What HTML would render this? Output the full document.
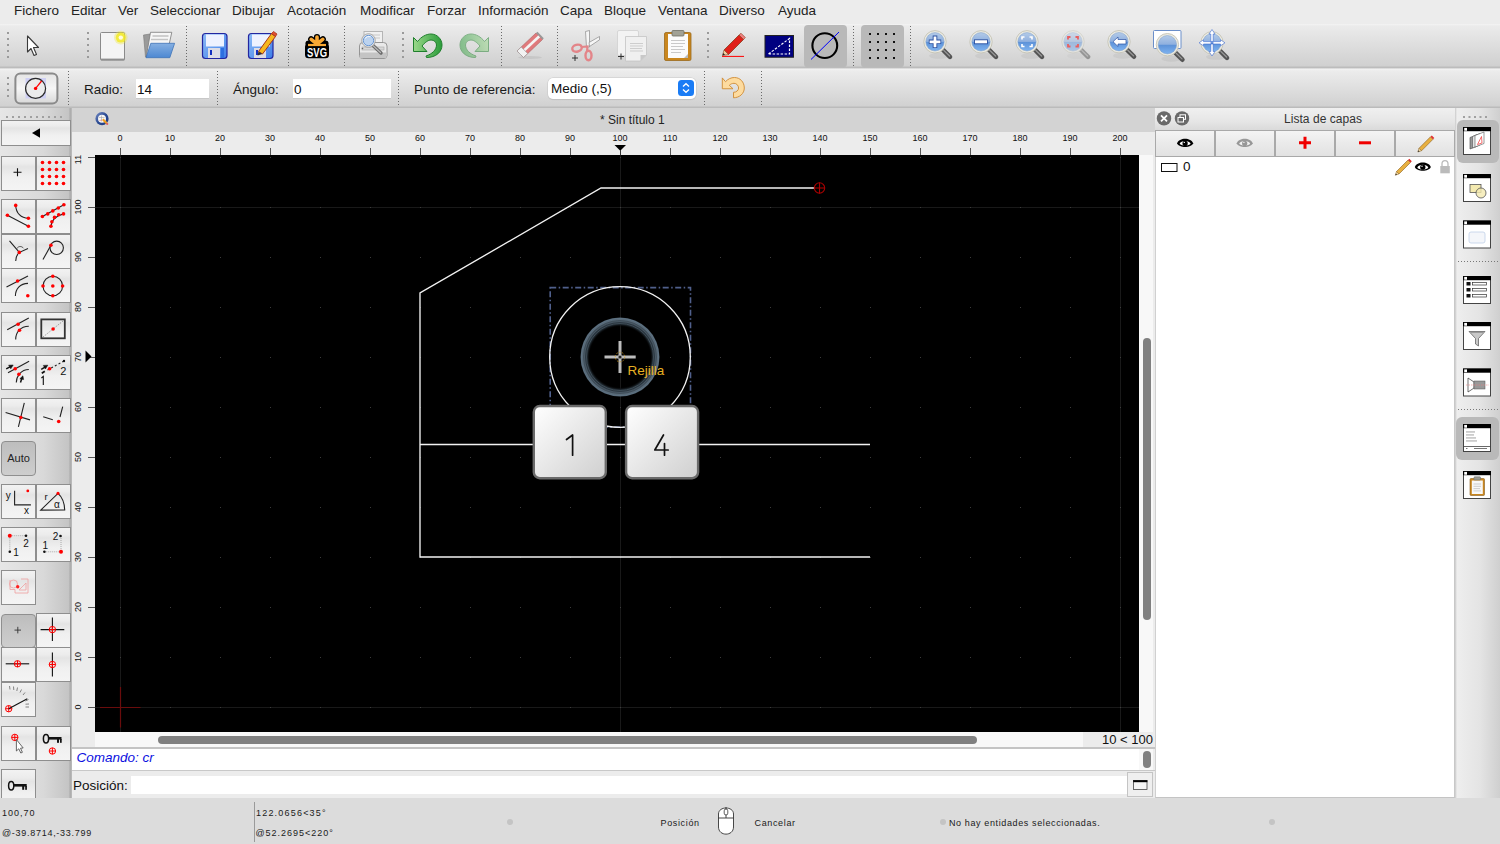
<!DOCTYPE html>
<html><head><meta charset="utf-8">
<style>
*{box-sizing:border-box}
html,body{margin:0;padding:0}
body{width:1500px;height:844px;overflow:hidden;position:relative;background:#ececec;font-family:"Liberation Sans",sans-serif;color:#1e1e1e}
.a{position:absolute}
#menubar{left:0;top:0;width:1500px;height:24px;background:#ececec}
#menubar span{position:absolute;top:3px;font-size:13.5px;line-height:16px;color:#222}
#tb1{left:0;top:24px;width:1500px;height:44px;background:linear-gradient(#f4f4f4 0,#ebebeb 2px,#d0d0d0 42px,#bcbcbc 43px)}
#tb2{left:0;top:68px;width:1500px;height:40px;background:linear-gradient(#c4c4c4 0,#f3f3f3 1px,#ececec 3px,#d1d1d1 38px,#bbbbbb 39px)}
.vsep{position:absolute;width:2px;border-left:2px dotted #8e8e8e}
#leftdock{left:0;top:108px;width:72px;height:690px;background:linear-gradient(90deg,#e6e6e6 0,#d9d9d9 60%,#c4c4c4 69px,#a9a9a9 70px,#bdbdbd 72px)}
#mdi{left:72px;top:108px;width:1083px;height:690px;background:#ececec}
#tabbar{left:0;top:0;width:1083px;height:23px;background:#d4d4d4}
#rightdock{left:1155px;top:108px;width:300px;height:690px;background:#fff}
#righttb{left:1455px;top:108px;width:45px;height:690px;background:linear-gradient(90deg,#d8d8d8 0,#ebebeb 3px,#e2e2e2 30px,#c9c9c9 45px)}
.lb{position:absolute;width:35px;height:35px;border:1px solid #8e8e8e;background:linear-gradient(#f2f2f2 0,#ececec 20%,#e4e4e4 30%,#f0f0f0 60%,#f4f4f4 100%)}
.lbp{position:absolute;border:1px solid #8f8f8f;border-radius:4px;background:linear-gradient(#bdbdbd,#cecece)}
.lyb{position:absolute;top:131px;width:58px;height:24.5px;background:linear-gradient(#f4f4f4,#eaeaea 50%,#e2e2e2)}
.st{font-size:9px;line-height:14px;color:#1a1a1a;letter-spacing:0.65px}
.st2{letter-spacing:0.8px}
#status{left:0;top:798px;width:1500px;height:46px;background:#dcdcdc;font-size:10px}
</style></head><body>
<div id="menubar" class="a">
<span style="left:14px">Fichero</span>
<span style="left:71px">Editar</span>
<span style="left:118px">Ver</span>
<span style="left:150px">Seleccionar</span>
<span style="left:232px">Dibujar</span>
<span style="left:287px">Acotación</span>
<span style="left:360px">Modificar</span>
<span style="left:427px">Forzar</span>
<span style="left:478px">Información</span>
<span style="left:560px">Capa</span>
<span style="left:604px">Bloque</span>
<span style="left:658px">Ventana</span>
<span style="left:719px">Diverso</span>
<span style="left:778px">Ayuda</span>
</div>
<div id="tb1" class="a"></div>
<svg class="a" style="left:0;top:24px" width="1500" height="44" viewBox="0 24 1500 44">
<defs>
<linearGradient id="gBlue" x1="0" y1="0" x2="0" y2="1"><stop offset="0" stop-color="#b4cbe8"/><stop offset="0.48" stop-color="#8fb0df"/><stop offset="0.52" stop-color="#5d92d8"/><stop offset="1" stop-color="#7eb3f0"/></linearGradient>
<linearGradient id="gFlop" x1="0" y1="0" x2="1" y2="1"><stop offset="0" stop-color="#8fbdf7"/><stop offset="1" stop-color="#3d7de8"/></linearGradient>
<linearGradient id="gUndo" x1="0" y1="0" x2="1" y2="0"><stop offset="0" stop-color="#9ad88a"/><stop offset="1" stop-color="#2a9c3a"/></linearGradient>
<g id="lens">
 <ellipse cx="4" cy="14" rx="10" ry="3" fill="#000" opacity="0.05"/>
 <path d="M7.8,7.8 L15,15" stroke="#555" stroke-width="4.6" stroke-linecap="round"/>
 <path d="M8.8,8.6 L14.6,14.2" stroke="#9a9a9a" stroke-width="1.2" stroke-linecap="round"/>
 <circle cx="0" cy="0" r="11.2" fill="#ecebe2" stroke="#c4c3b6" stroke-width="0.9"/>
 <circle cx="0" cy="0" r="9.2" fill="url(#gBlue)" stroke="#7a9cc8" stroke-width="0.5"/>
</g>
</defs>
<!-- handle dots -->
<g fill="#9a9a9a">
 <rect x="7" y="32" width="2" height="2"/><rect x="7" y="38" width="2" height="2"/><rect x="7" y="44" width="2" height="2"/><rect x="7" y="50" width="2" height="2"/><rect x="7" y="56" width="2" height="2"/>
 <rect x="87" y="32" width="2" height="2"/><rect x="87" y="38" width="2" height="2"/><rect x="87" y="44" width="2" height="2"/><rect x="87" y="50" width="2" height="2"/><rect x="87" y="56" width="2" height="2"/>
 <rect x="402" y="32" width="2" height="2"/><rect x="402" y="38" width="2" height="2"/><rect x="402" y="44" width="2" height="2"/><rect x="402" y="50" width="2" height="2"/><rect x="402" y="56" width="2" height="2"/>
 <rect x="707" y="32" width="2" height="2"/><rect x="707" y="38" width="2" height="2"/><rect x="707" y="44" width="2" height="2"/><rect x="707" y="50" width="2" height="2"/><rect x="707" y="56" width="2" height="2"/>
</g>
<!-- fine separators -->
<g stroke="#6a6a6a" stroke-width="1" stroke-dasharray="1 2">
 <line x1="186.5" y1="26" x2="186.5" y2="67"/>
 <line x1="288.5" y1="26" x2="288.5" y2="67"/>
 <line x1="344.5" y1="26" x2="344.5" y2="67"/>
 <line x1="501.5" y1="26" x2="501.5" y2="67"/>
 <line x1="557.5" y1="26" x2="557.5" y2="67"/>
 <line x1="853.5" y1="26" x2="853.5" y2="67"/>
 <line x1="910.5" y1="26" x2="910.5" y2="67"/>
</g>
<!-- pointer -->
<path d="M27.5,36 L27.5,52 L31,48.5 L34,55.5 L36.5,54.5 L33.5,47.5 L38.5,47.5 Z" fill="#fff" stroke="#3a3a3a" stroke-width="1.1" stroke-linejoin="round"/>
<!-- new doc -->
<rect x="100.5" y="32.5" width="24" height="27.5" rx="1" fill="#f4f4f4" stroke="#8a8a8a" stroke-width="1"/>
<rect x="101" y="58.6" width="23.5" height="1.8" fill="#8f8f8f"/>
<circle cx="120.8" cy="37.6" r="6.8" fill="#eee430" opacity="0.35"/>
<circle cx="120.8" cy="37.6" r="5" fill="#f2ea22" opacity="0.8"/>
<circle cx="120.8" cy="37.6" r="2.2" fill="#fffbe0"/>
<!-- open folder -->
<path d="M143.5,35 L150,34 L152,34 L147,57 L145.5,57 Z" fill="#9a9a9a" stroke="#777" stroke-width="0.6"/>
<path d="M150.5,32.3 L171.8,32.3 L169.3,43.5 L146.3,56.5 Z" fill="#f6f6f6" stroke="#7a7a7a" stroke-width="0.8"/>
<path d="M152.5,36 L168.5,36" stroke="#bdbdbd" stroke-width="1.4"/><path d="M151,39.5 L168,39.5" stroke="#c4c4c4" stroke-width="1.4"/>
<defs><linearGradient id="gFold" x1="0" y1="0" x2="0" y2="1"><stop offset="0" stop-color="#86b0e2"/><stop offset="1" stop-color="#4d88d2"/></linearGradient></defs>
<path d="M150.8,43.3 L174.6,43.3 L169.8,57.7 L146,57.7 Z" fill="url(#gFold)" stroke="#3f73b8" stroke-width="0.8" stroke-linejoin="round"/>
<!-- save -->
<rect x="202.5" y="33.5" width="24.5" height="25" rx="3" fill="url(#gFlop)" stroke="#2326a0" stroke-width="1.2"/>
<rect x="206" y="34.5" width="18" height="12" fill="#eef2ff"/>
<rect x="208" y="48" width="12" height="10" fill="#dcdce6"/>
<rect x="210" y="50" width="2" height="5" fill="#1530c0"/>
<rect x="221" y="48" width="3" height="10" fill="#2d6fe0"/>
<!-- save as -->
<rect x="248.5" y="33.5" width="24.5" height="25" rx="3" fill="url(#gFlop)" stroke="#2326a0" stroke-width="1.2"/>
<rect x="252" y="34.5" width="18" height="12" fill="#eef2ff"/>
<rect x="254" y="48" width="12" height="10" fill="#dcdce6"/>
<rect x="256" y="50" width="2" height="5" fill="#1530c0"/>
<path d="M258.5,51.5 L271.5,33.5 L275.5,36.5 L262.5,54 Z" fill="#f6b820" stroke="#a8341a" stroke-width="1"/>
<path d="M271.5,33.5 L273.5,31.5 L277,34 L275.5,36.5 Z" fill="#e05030" stroke="#a8341a" stroke-width="0.8"/>
<path d="M258.5,51.5 L257.5,55.5 L262.5,54 Z" fill="#333"/>
<!-- SVG -->
<rect x="305" y="43.5" width="24" height="14.8" rx="3.5" fill="#000"/>
<g stroke="#000" stroke-width="6.2" stroke-linecap="round"><path d="M317,44 L317,37 M317,44 L311.2,39.3 M317,44 L322.8,39.3 M317,44 L308.5,43.5 M317,44 L325.5,43.5"/></g>
<g stroke="#f9a833" stroke-width="3.6" stroke-linecap="round"><path d="M317,44 L317,37 M317,44 L311.2,39.3 M317,44 L322.8,39.3"/></g>
<path d="M308,45 L326,45" stroke="#f9a833" stroke-width="2.2"/>
<text x="317" y="56.5" text-anchor="middle" font-family="Liberation Sans" font-weight="bold" font-size="12" fill="#fff" textLength="20" lengthAdjust="spacingAndGlyphs">SVG</text>
<!-- print preview -->
<rect x="364" y="31.5" width="18.5" height="14" fill="#f0f0f0" stroke="#b0b0b0" stroke-width="0.9"/>
<path d="M367,35 L380,35 M367,38 L380,38" stroke="#c8c8c8" stroke-width="1"/>
<path d="M359.5,46 Q359.5,42.5 363,42.5 L383.5,42.5 Q387,42.5 387,46 L387,55.5 Q387,58.5 384,58.5 L362.5,58.5 Q359.5,58.5 359.5,55.5 Z" fill="#e9e9e9" stroke="#8c8c8c" stroke-width="0.9"/>
<rect x="360" y="52.5" width="26.5" height="5.5" fill="#c4c4c4"/>
<rect x="362" y="47" width="22" height="3" fill="#d8d8d8" stroke="#a8a8a8" stroke-width="0.6"/>
<circle cx="362.5" cy="48.5" r="0.8" fill="#666"/>
<path d="M373,45.5 L381,53" stroke="#6a6a6a" stroke-width="3.4" stroke-linecap="round"/>
<path d="M373.5,46 L380.5,52.5" stroke="#b8b8b8" stroke-width="1.2" stroke-linecap="round"/>
<circle cx="368.5" cy="40.5" r="6.8" fill="#e8e8e8" stroke="#9a9a9a" stroke-width="0.8"/>
<circle cx="368.5" cy="40.5" r="5.2" fill="#bcd3ef" stroke="#5d8fd0" stroke-width="0.9"/>
<path d="M365,38.5 Q367,35.8 370.5,36.5" stroke="#fff" stroke-width="1" fill="none" opacity="0.8"/>
<!-- undo -->
<path d="M413.5,37.5 L417.5,41.5 C421,37 426,34 431,34 C437,34 442,39 442,45 C442,52 436,57.5 426.5,57.5 L426,56 C432,54 436.5,50 436.5,45 C436.5,42 434,40 431,40 C428,40 425,42.5 422,46 L427,51.5 L413.5,51.5 Z" fill="url(#gUndo)" stroke="#1f7f2c" stroke-width="1"/>
<!-- redo -->
<g opacity="0.5"><path transform="translate(902,0) scale(-1,1)" d="M413.5,37.5 L417.5,41.5 C421,37 426,34 431,34 C437,34 442,39 442,45 C442,52 436,57.5 426.5,57.5 L426,56 C432,54 436.5,50 436.5,45 C436.5,42 434,40 431,40 C428,40 425,42.5 422,46 L427,51.5 L413.5,51.5 Z" fill="url(#gUndo)" stroke="#1f7f2c" stroke-width="1"/></g>
<!-- eraser -->
<ellipse cx="530" cy="57.5" rx="12" ry="1.5" fill="#bdbdbd" opacity="0.6"/>
<path d="M517,51 L536,33 L542.5,39.5 L523.5,57.5 Z" fill="#e07a7c" stroke="#b5686a" stroke-width="0.7"/>
<path d="M520,54.3 L539.3,36.2" stroke="#f4f4f4" stroke-width="2.6"/>
<path d="M536,33 L537.5,31.8 L543.8,38.2 L542.5,39.5 Z" fill="#999"/>
<path d="M517,51 L521.2,47 L527.7,53.5 L523.5,57.5 Z" fill="#f2f2f2" stroke="#9a9a9a" stroke-width="0.7"/>
<!-- scissors -->
<path d="M585.5,31.5 L589.5,30.5 L589.5,47 L586.5,47 Z" fill="#f6f6f6" stroke="#8a8a8a" stroke-width="0.7"/>
<path d="M589,42.5 L599.5,36.5 L599.5,39.8 L589.5,46.5 Z" fill="#f6f6f6" stroke="#8a8a8a" stroke-width="0.7"/>
<ellipse cx="577" cy="48.2" rx="4.8" ry="3.4" transform="rotate(-15 577 48.2)" fill="none" stroke="#e38589" stroke-width="2.4"/>
<ellipse cx="588.5" cy="55.5" rx="3" ry="4.8" fill="none" stroke="#e38589" stroke-width="2.4"/>
<path d="M581.5,47 L587.5,46.5 L587,51" stroke="#e38589" stroke-width="2.2" fill="none"/>
<path d="M572,58 L578,58 M575,55 L575,61" stroke="#333" stroke-width="1"/>
<!-- copy -->
<rect x="617.5" y="30.5" width="21" height="25" rx="1.5" fill="#f3f3f3" stroke="#cfcfcf" stroke-width="0.8"/>
<path d="M625.5,36.5 L646.5,36.5 L646.5,55 L640.5,61 L625.5,61 Z" fill="#f0f0f0" stroke="#c4c4c4" stroke-width="0.8"/>
<path d="M640.5,61 L640.5,55 L646.5,55 Z" fill="#c8c8c8"/>
<g stroke="#cdcdcd" stroke-width="1"><path d="M630,43.5 L643,43.5 M630,46 L643,46 M630,48.5 L642,48.5 M630,51 L643,51"/></g>
<path d="M618,56.5 L624,56.5 M621,53.5 L621,59.5" stroke="#333" stroke-width="1"/>
<!-- paste -->
<rect x="664.5" y="32.5" width="26.5" height="28" rx="1.5" fill="#c9861e" stroke="#9a6a1c" stroke-width="0.8"/>
<rect x="668" y="34" width="20" height="24" fill="#fbfbfb"/>
<path d="M684,58 L688,58 L688,54 Z" fill="#bbb"/>
<rect x="672" y="30.5" width="12" height="5.5" rx="1" fill="#a2a296" stroke="#6f6f64" stroke-width="0.8"/>
<g stroke="#c9c9c9" stroke-width="1"><path d="M671,40.5 L685,40.5 M671,43.5 L685,43.5 M671,46.5 L683,46.5 M671,49.5 L685,49.5 M671,52.5 L681,52.5"/></g>
<!-- pencil -->
<path d="M722,56.4 L744,56.4" stroke="#ff0000" stroke-width="1"/>
<path d="M724,50 L739,35 L743.5,39.5 L728.5,54.5 Z" fill="#e0201a" stroke="#8a3a1a" stroke-width="0.8"/>
<path d="M739,35 L741,33.2 L745.3,37.5 L743.5,39.5 Z" fill="#f08080" stroke="#8a3a1a" stroke-width="0.6"/>
<path d="M724,50 L722.5,55.5 L728.5,54.5 Z" fill="#f0d0a0" stroke="#8a3a1a" stroke-width="0.6"/>
<path d="M722.5,55.5 L723.2,53 L725,54.8 Z" fill="#222"/>
<!-- blue triangle -->
<rect x="765" y="35.5" width="28.5" height="21.7" fill="#000080" stroke="#222" stroke-width="1"/>
<path d="M768.5,54 L789.5,38.5 L789.5,54 Z" fill="none" stroke="#fff" stroke-width="1.2" stroke-dasharray="2.5 1.5"/>
<!-- pressed buttons -->
<rect x="804" y="25" width="43" height="42.4" rx="4" fill="#b9b9b9"/>
<rect x="861" y="25" width="43" height="42.4" rx="4" fill="#b9b9b9"/>
<circle cx="824.8" cy="45.6" r="12.4" fill="none" stroke="#000" stroke-width="2.1"/>
<path d="M811,59.5 L839,32" stroke="#0000ff" stroke-width="1"/>
<g fill="#111">
 <rect x="869" y="33" width="2" height="2"/><rect x="877" y="33" width="2" height="2"/><rect x="885" y="33" width="2" height="2"/><rect x="893" y="33" width="2" height="2"/>
 <rect x="869" y="41" width="2" height="2"/><rect x="877" y="41" width="2" height="2"/><rect x="885" y="41" width="2" height="2"/><rect x="893" y="41" width="2" height="2"/>
 <rect x="869" y="49" width="2" height="2"/><rect x="877" y="49" width="2" height="2"/><rect x="885" y="49" width="2" height="2"/><rect x="893" y="49" width="2" height="2"/>
 <rect x="869" y="57" width="2" height="2"/><rect x="877" y="57" width="2" height="2"/><rect x="885" y="57" width="2" height="2"/><rect x="893" y="57" width="2" height="2"/>
</g>
<!-- zoom icons -->
<use href="#lens" x="935" y="41.8"/>
<path d="M928.8,41.8 L941.2,41.8 M935,35.6 L935,48" stroke="#2a50a0" stroke-width="4.6"/>
<path d="M929.6,41.8 L940.4,41.8 M935,36.4 L935,47.2" stroke="#fff" stroke-width="2.8"/>
<use href="#lens" x="981" y="41.8"/>
<rect x="974.5" y="39.8" width="13" height="4" fill="#fff" stroke="#2a50a0" stroke-width="0.9"/>
<use href="#lens" x="1027" y="41.8"/>
<g fill="none" stroke="#fff" stroke-width="1.6"><path d="M1022,39.5 L1022,37 L1024.5,37 M1029.5,37 L1032,37 L1032,39.5 M1032,44 L1032,46.5 L1029.5,46.5 M1024.5,46.5 L1022,46.5 L1022,44"/></g>
<g opacity="0.5"><use href="#lens" x="1073" y="41.8"/></g>
<g fill="none" stroke="#e86060" stroke-width="1.8"><path d="M1068,39.5 L1068,37 L1070.5,37 M1075.5,37 L1078,37 L1078,39.5 M1078,44 L1078,46.5 L1075.5,46.5 M1070.5,46.5 L1068,46.5 L1068,44"/></g>
<use href="#lens" x="1119" y="41.7"/>
<path d="M1113,41.7 L1118,37 L1118,39.5 L1126,39.5 L1126,44 L1118,44 L1118,46.5 Z" fill="#fff" stroke="#2a50a0" stroke-width="0.7"/>
<rect x="1153.5" y="30.5" width="27.5" height="18" rx="1" fill="#fff" stroke="#6b8fca" stroke-width="1"/>
<use href="#lens" x="1167.4" y="44.7"/>
<use href="#lens" x="1212" y="42.8"/>
<g fill="#fff" stroke="#3a6ad0" stroke-width="0.6">
 <path d="M1212,29.5 L1215,34 L1213.2,34 L1213.2,41.6 L1210.8,41.6 L1210.8,34 L1209,34 Z"/>
 <path d="M1212,56 L1215,51.5 L1213.2,51.5 L1213.2,44 L1210.8,44 L1210.8,51.5 L1209,51.5 Z"/>
 <path d="M1199,42.8 L1203.5,39.8 L1203.5,41.6 L1211,41.6 L1211,44 L1203.5,44 L1203.5,45.8 Z"/>
 <path d="M1225,42.8 L1220.5,39.8 L1220.5,41.6 L1213,41.6 L1213,44 L1220.5,44 L1220.5,45.8 Z"/>
</g>
</svg>

<div id="tb2" class="a"></div>
<svg class="a" style="left:0;top:68px" width="1500" height="40" viewBox="0 68 1500 40">
<g fill="#9a9a9a"><rect x="7" y="77" width="2" height="2"/><rect x="7" y="83" width="2" height="2"/><rect x="7" y="89" width="2" height="2"/><rect x="7" y="95" width="2" height="2"/></g>
<g stroke="#6a6a6a" stroke-width="1" stroke-dasharray="1 2">
 <line x1="68.5" y1="71" x2="68.5" y2="105"/>
 <line x1="217.5" y1="71" x2="217.5" y2="105"/>
 <line x1="398.5" y1="71" x2="398.5" y2="105"/>
 <line x1="704.5" y1="71" x2="704.5" y2="105"/>
 <line x1="761.5" y1="71" x2="761.5" y2="105"/>
</g>
<defs><linearGradient id="gBtn" x1="0" y1="0" x2="0" y2="1"><stop offset="0" stop-color="#e4e4e4"/><stop offset="0.5" stop-color="#f6f6f6"/><stop offset="1" stop-color="#d8d8d8"/></linearGradient></defs>
<rect x="15.4" y="73.5" width="42" height="30" rx="5" fill="url(#gBtn)" stroke="#8a8a8a" stroke-width="2"/>
<rect x="25.5" y="78" width="20.5" height="20.5" fill="#cfd0f4"/>
<circle cx="35.6" cy="88.4" r="10" fill="#ececec" stroke="#2a2a2a" stroke-width="1.2"/>
<path d="M35.6,88.4 L41.6,81" stroke="#ff0000" stroke-width="1.2"/>
<circle cx="35.6" cy="88.4" r="1.7" fill="#ff0000"/>
<path d="M722.3,77.9 L725.5,81.7 C728,79 731,77.5 734.5,77.5 C740,77.5 744.3,82 744.3,88 C744.3,93.5 739.5,97.8 733.5,97.8 L733.5,92.3 C736.5,92.3 738.6,90.3 738.6,88 C738.6,85.5 736.5,83.3 734,83.3 C732,83.3 730.5,84.2 729.3,85.3 L733,88.75 L722.3,88.75 Z" fill="#fddb9f" stroke="#cf8a32" stroke-width="0.9" stroke-linejoin="round"/>
</svg>
<div class="a" style="left:84px;top:81.5px;font-size:13.5px;line-height:16px;color:#1a1a1a">Radio:</div>
<div class="a" style="left:136px;top:79px;width:73px;height:19px;background:#fff;box-shadow:0 1px 0 #c8c8c8;font-size:13.5px;line-height:19px;padding-left:1px;padding-top:0.5px;color:#111">14</div>
<div class="a" style="left:233px;top:81.5px;font-size:13.5px;line-height:16px;color:#1a1a1a">Ángulo:</div>
<div class="a" style="left:293px;top:79px;width:98px;height:19px;background:#fff;box-shadow:0 1px 0 #c8c8c8;font-size:13.5px;line-height:19px;padding-left:1px;padding-top:0.5px;color:#111">0</div>
<div class="a" style="left:414px;top:81.5px;font-size:13.5px;line-height:16px;color:#1a1a1a">Punto de referencia:</div>
<div class="a" style="left:548px;top:77.5px;width:148px;height:21px;background:#fff;border-radius:5px;box-shadow:0 0 0 0.5px #c8c8c8, 0 1px 1px rgba(0,0,0,0.12);font-size:13.5px;line-height:21px;padding-left:3px;padding-top:0.5px;color:#111">Medio (,5)
 <div class="a" style="left:130px;top:2.5px;width:16px;height:16px;background:#1a7cf5;border-radius:3.5px">
  <svg width="16" height="16" style="position:absolute;left:0;top:0"><path d="M5,6.5 L8,3.8 L11,6.5 M5,9.5 L8,12.2 L11,9.5" fill="none" stroke="#fff" stroke-width="1.4"/></svg>
 </div>
</div>

<div id="leftdock" class="a"></div>
<div id="ldbtns">
<div class="lb" style="left:1px;top:120px;width:70px;height:26px"></div>
<div class="lb" style="left:1px;top:156px"></div><div class="lb" style="left:36px;top:156px"></div>
<div class="lb" style="left:1px;top:199px"></div><div class="lb" style="left:36px;top:199px"></div>
<div class="lb" style="left:1px;top:233.5px"></div><div class="lb" style="left:36px;top:233.5px"></div>
<div class="lb" style="left:1px;top:268px"></div><div class="lb" style="left:36px;top:268px"></div>
<div class="lb" style="left:1px;top:312px"></div><div class="lb" style="left:36px;top:312px"></div>
<div class="lb" style="left:1px;top:355px"></div><div class="lb" style="left:36px;top:355px"></div>
<div class="lb" style="left:1px;top:398px"></div><div class="lb" style="left:36px;top:398px"></div>
<div class="lbp" style="left:1px;top:441px;width:35px;height:34.5px"></div>
<div class="lb" style="left:1px;top:484px"></div><div class="lb" style="left:36px;top:484px"></div>
<div class="lb" style="left:1px;top:527px"></div><div class="lb" style="left:36px;top:527px"></div>
<div class="lb" style="left:1px;top:570px"></div>
<div class="lbp" style="left:1px;top:613.5px;width:35px;height:34px"></div><div class="lb" style="left:36px;top:613px"></div>
<div class="lb" style="left:1px;top:647px"></div><div class="lb" style="left:36px;top:647px"></div>
<div class="lb" style="left:1px;top:682px"></div>
<div class="lb" style="left:1px;top:725.5px"></div><div class="lb" style="left:36px;top:725.5px"></div>
<div class="lb" style="left:1px;top:769px;height:40px"></div>
</div>
<svg class="a" style="left:0;top:108px" width="72" height="690" viewBox="0 108 72 690">
<g fill="#a0a0a0"><rect x="6" y="116" width="2" height="2"/><rect x="12" y="116" width="2" height="2"/><rect x="18" y="116" width="2" height="2"/><rect x="24" y="116" width="2" height="2"/><rect x="30" y="116" width="2" height="2"/><rect x="36" y="116" width="2" height="2"/><rect x="42" y="116" width="2" height="2"/><rect x="48" y="116" width="2" height="2"/><rect x="54" y="116" width="2" height="2"/><rect x="60" y="116" width="2" height="2"/></g>
<path d="M32,133 L40,128.3 L40,137.7 Z" fill="#000"/>
<path d="M13.5,172.3 L21.5,172.3 M17.5,168.3 L17.5,176.3" stroke="#111" stroke-width="1.1"/>
<g fill="#ff0000">
 <circle cx="42.5" cy="162.5" r="1.8"/><circle cx="49.5" cy="162.5" r="1.8"/><circle cx="56.5" cy="162.5" r="1.8"/><circle cx="63.5" cy="162.5" r="1.8"/>
 <circle cx="42.5" cy="169.5" r="1.8"/><circle cx="49.5" cy="169.5" r="1.8"/><circle cx="56.5" cy="169.5" r="1.8"/><circle cx="63.5" cy="169.5" r="1.8"/>
 <circle cx="42.5" cy="176.5" r="1.8"/><circle cx="49.5" cy="176.5" r="1.8"/><circle cx="56.5" cy="176.5" r="1.8"/><circle cx="63.5" cy="176.5" r="1.8"/>
 <circle cx="42.5" cy="183.5" r="1.8"/><circle cx="49.5" cy="183.5" r="1.8"/><circle cx="56.5" cy="183.5" r="1.8"/><circle cx="63.5" cy="183.5" r="1.8"/>
</g>
<g stroke="#222" stroke-width="1.1" fill="none">
 <!-- R2 -->
 <path d="M15.7,205.4 C16,213 21,218.2 28.4,218.2"/>
 <path d="M7.4,215.2 L28.4,226.3"/>
 <path d="M42.4,216.5 L63.9,204.8"/>
 <path d="M50.9,226.3 C51.5,221 55,216 63.5,213.9"/>
 <!-- R3 -->
 <path d="M9.5,240.9 L19.3,252.4 L28,248.5 M19.3,252.4 C16.5,255 15.7,258 15.7,261"/>
 <path d="M17,248.5 C18,246 22,245.8 23.5,248.3" stroke-width="0.7"/>
 <circle cx="56.7" cy="247.8" r="6.7"/>
 <path d="M43,259.6 L50.9,245.2"/>
 <!-- R4 -->
 <path d="M6.5,287 L28,275.9"/>
 <path d="M15.4,296 C15.4,289 20,283.4 28,283.4"/>
 <circle cx="52.8" cy="286" r="9.8"/>
 <!-- R5 -->
 <path d="M7.2,329.8 L28.8,318.1"/>
 <path d="M15.7,339.4 C15.7,333 20,326.3 28.8,326.3"/>
 <rect x="41.3" y="319.4" width="23.5" height="18.9" stroke-width="1.8" stroke="#333"/>
 <path d="M43,337 L63,321" stroke-width="0.6" stroke-dasharray="1.5 1.2" stroke="#666"/>
 <!-- R6 -->
 <path d="M8,372.7 L29.1,361.2"/>
 <path d="M16.3,382.5 C16.5,376 21,369.5 28.8,369.5"/>
 <path d="M47.5,370 L64,361" stroke-dasharray="2 2.2"/>
 <!-- R7 -->
 <path d="M5.6,412.5 L30,419.9 M24.3,402.9 L18.4,426.9"/>
 <path d="M43.2,416.7 L52.8,419.7 M62.7,406.6 L60,417"/>
 <!-- R8 -->
 <path d="M14.6,490.7 L14.6,504.9 L30.9,504.9"/>
 <path d="M40.7,510.1 L58,493.4 C62,497 64.5,503 64.7,510 Z"/>
</g>
<g fill="#ff0000">
 <circle cx="15.7" cy="205.4" r="1.8"/><circle cx="28.4" cy="218.2" r="1.8"/><circle cx="7.4" cy="215.2" r="1.8"/><circle cx="28.4" cy="226.3" r="1.8"/>
 <circle cx="42.4" cy="216.5" r="1.8"/><circle cx="47.7" cy="213.9" r="1.8"/><circle cx="52.8" cy="210.9" r="1.8"/><circle cx="58.3" cy="208" r="1.8"/><circle cx="63.9" cy="204.8" r="1.8"/>
 <circle cx="50.9" cy="226.3" r="1.8"/><circle cx="51.9" cy="221.7" r="1.8"/><circle cx="54.5" cy="217.4" r="1.8"/><circle cx="58.7" cy="214.8" r="1.8"/><circle cx="63.5" cy="213.9" r="1.8"/>
 <circle cx="19.3" cy="252.4" r="1.8"/><circle cx="50.9" cy="245.2" r="1.8"/>
 <circle cx="17.6" cy="281" r="1.8"/><circle cx="27.8" cy="295.8" r="1.8"/>
 <circle cx="52.8" cy="286" r="1.8"/><circle cx="52.8" cy="276.2" r="1.8"/><circle cx="52.8" cy="295.8" r="1.8"/><circle cx="43" cy="286" r="1.8"/><circle cx="62.6" cy="286" r="1.8"/>
 <circle cx="18.1" cy="324.2" r="1.8"/><circle cx="19.5" cy="330.3" r="1.8"/><circle cx="53.1" cy="329" r="1.8"/>
 <circle cx="15.2" cy="368.7" r="1.8"/><circle cx="18.9" cy="374.3" r="1.8"/><circle cx="49.6" cy="368.7" r="1.8"/>
 <circle cx="20.8" cy="417.5" r="1.8"/><circle cx="58.7" cy="421.5" r="1.8"/>
 <circle cx="27.8" cy="490.9" r="1.4"/><circle cx="58" cy="493.4" r="1.6"/>
</g>
<g fill="#111" stroke="#111" stroke-linejoin="round">
 <path d="M6.2,368.8 L10,366.8" stroke-width="1.5"/><path d="M13.2,365 L8.6,365.2 L10.8,368.8 Z" stroke-width="0.5"/>
 <path d="M20.5,382.5 L21.8,378.5" stroke-width="1.5"/><path d="M22.9,375.8 L19.8,378.8 L23.6,379.6 Z" stroke-width="0.5"/>
 <path d="M41.2,369.3 L45,367.2" stroke-width="1.5"/><path d="M47.8,365.2 L43.3,365.4 L45.4,369 Z" stroke-width="0.5"/>
 <path d="M41.8,373.2 L44.8,371.3" stroke-width="1.8"/><circle cx="64" cy="361" r="1.2" stroke="none"/>
</g>
<g font-family="Liberation Sans" fill="#111">
 <path d="M41.4,378 L43.3,376.4 L43.3,385" fill="none" stroke="#111" stroke-width="1.1"/><text x="60.3" y="374.9" font-size="11">2</text>
 <text x="5.8" y="498.5" font-size="10">y</text><text x="24" y="513.5" font-size="10">x</text>
 <text x="44.5" y="500" font-size="9.5">r</text><text x="54" y="508" font-size="10">α</text>
 <text x="13.3" y="556" font-size="10">1</text><text x="23.2" y="547" font-size="10">2</text>
 <text x="42.5" y="549" font-size="10">1</text><text x="52.8" y="540" font-size="10">2</text>
</g>
<text x="18.5" y="462" font-family="Liberation Sans" font-size="11" fill="#222" text-anchor="middle">Auto</text>
<g stroke="#999" stroke-width="0.8" fill="none" stroke-dasharray="1 1">
 <path d="M9.8,535.7 L26,535.7 M9.8,535.7 L9.8,551.8"/>
 <path d="M61,536 L61,551.8 L44.4,551.8"/>
</g>
<g fill="#111"><circle cx="26" cy="535.7" r="1.3"/><circle cx="9.8" cy="551.8" r="1.3"/><circle cx="60.5" cy="536" r="1.3"/><circle cx="44.4" cy="551.8" r="1.3"/></g>
<g fill="#ff0000"><circle cx="9.8" cy="535.7" r="2"/><circle cx="61" cy="551.8" r="2"/></g>
<!-- R10 faded -->
<g stroke="#f0a0a0" stroke-width="0.8" fill="none">
 <circle cx="13.5" cy="584" r="4"/>
 <path d="M10,580 L10,589.5 L15,589.5 L15,593 L28,593 L28,579 L21,579"/>
 <path d="M19,590 L26,583 L26,590 Z"/>
</g>
<circle cx="17.7" cy="586.7" r="1.7" fill="#ff2020"/>
<!-- R11 -->
<path d="M14.5,630.1 L21,630.1 M17.8,626.8 L17.8,633.4" stroke="#333" stroke-width="0.9"/>
<g stroke="#111" stroke-width="1.1">
 <path d="M40.6,629.6 L64.3,629.6 M52.4,617.6 L52.4,641"/>
 <path d="M5.7,663.8 L29.2,663.8"/>
 <path d="M52.4,652.4 L52.4,676.4"/>
</g>
<g fill="none" stroke="#ff0000" stroke-width="1">
 <circle cx="52.4" cy="629.6" r="3.2"/><path d="M49.2,629.6 L55.6,629.6 M52.4,626.4 L52.4,632.8"/>
 <circle cx="17.5" cy="663.8" r="3.2"/><path d="M14.3,663.8 L20.7,663.8 M17.5,660.6 L17.5,667"/>
 <circle cx="52.4" cy="664.5" r="3.2"/><path d="M49.2,664.5 L55.6,664.5 M52.4,661.3 L52.4,667.7"/>
 <circle cx="8.7" cy="708.7" r="3.2"/><path d="M5.5,708.7 L11.9,708.7 M8.7,705.5 L8.7,711.9"/>
 <circle cx="14.8" cy="737.4" r="3.2"/><path d="M11.6,737.4 L18,737.4 M14.8,734.2 L14.8,740.6"/>
 <circle cx="52.4" cy="751" r="3.2"/><path d="M49.2,751 L55.6,751 M52.4,747.8 L52.4,754.2"/>
</g>
<!-- meter -->
<path d="M8.7,708.7 L27.3,698.7" stroke="#111" stroke-width="1.1"/>
<g stroke="#777" stroke-width="0.9"><path d="M9.5,686 L10,689.5 M13.5,686.5 L13.8,690 M17.5,687.5 L16.8,691 M21.5,689.5 L20,692.5 M25,692.5 L23,695 M28.5,699.5 L25.5,701 M29,704 L25.5,704.2 M29,707 L25.5,707"/></g>
<!-- cursor -->
<path d="M16.4,739.5 L16.4,751 L18.8,748.8 L20.8,753 L22.4,752.3 L20.5,748.2 L23.2,748 Z" fill="#fff" stroke="#444" stroke-width="0.8"/>
<!-- keys -->
<g fill="#111">
 <ellipse cx="46" cy="738.7" rx="2.6" ry="4.2" fill="none" stroke="#111" stroke-width="1.5"/>
 <rect x="48.5" y="737" width="13" height="2.6"/><rect x="57" y="739" width="2" height="3.8"/><rect x="60" y="739" width="1.7" height="3.8"/>
 <ellipse cx="11.2" cy="785.7" rx="2.6" ry="4.2" fill="none" stroke="#111" stroke-width="1.5"/>
 <rect x="13.7" y="784" width="13" height="2.6"/><rect x="22.2" y="786" width="2" height="3.8"/><rect x="25.2" y="786" width="1.7" height="3.8"/>
</g>
</svg>

<div class="a" style="left:72px;top:108px;width:1083px;height:24px;background:#d3d3d3"></div>
<div class="a" style="left:72px;top:132px;width:1083px;height:23px;background:#ececec"></div>
<div class="a" style="left:72px;top:155px;width:23px;height:593px;background:#ececec"></div>
<svg class="a" style="left:72px;top:108px" width="1083" height="690" viewBox="72 108 1083 690">
<defs><linearGradient id="qring" x1="0" y1="0" x2="1" y2="1"><stop offset="0" stop-color="#7a90c8"/><stop offset="0.5" stop-color="#2a4a92"/><stop offset="1" stop-color="#1f3a80"/></linearGradient></defs><circle cx="102" cy="118.7" r="6.6" fill="url(#qring)"/><circle cx="102" cy="118.7" r="4" fill="#f6f6f6"/><path d="M99,117.5 L104.5,117.5 M101.5,115.5 L101.5,121.5" stroke="#999" stroke-width="0.5"/><path d="M99.5,120.5 L102,120" stroke="#e07070" stroke-width="0.6"/><path d="M102.8,119.3 L106.6,123.3" stroke="#f0a020" stroke-width="2.2"/><circle cx="107.2" cy="123.9" r="1.1" fill="#e06060"/>
<g font-family="Liberation Sans" font-size="9" fill="#111" text-anchor="middle">
<text x="120" y="141">0</text>
<text x="170" y="141">10</text>
<text x="220" y="141">20</text>
<text x="270" y="141">30</text>
<text x="320" y="141">40</text>
<text x="370" y="141">50</text>
<text x="420" y="141">60</text>
<text x="470" y="141">70</text>
<text x="520" y="141">80</text>
<text x="570" y="141">90</text>
<text x="620" y="141">100</text>
<text x="670" y="141">110</text>
<text x="720" y="141">120</text>
<text x="770" y="141">130</text>
<text x="820" y="141">140</text>
<text x="870" y="141">150</text>
<text x="920" y="141">160</text>
<text x="970" y="141">170</text>
<text x="1020" y="141">180</text>
<text x="1070" y="141">190</text>
<text x="1120" y="141">200</text>












</g>
<g stroke="#555" stroke-width="1">
<line x1="120.5" y1="148" x2="120.5" y2="155"/>
<line x1="170.5" y1="148" x2="170.5" y2="155"/>
<line x1="220.5" y1="148" x2="220.5" y2="155"/>
<line x1="270.5" y1="148" x2="270.5" y2="155"/>
<line x1="320.5" y1="148" x2="320.5" y2="155"/>
<line x1="370.5" y1="148" x2="370.5" y2="155"/>
<line x1="420.5" y1="148" x2="420.5" y2="155"/>
<line x1="470.5" y1="148" x2="470.5" y2="155"/>
<line x1="520.5" y1="148" x2="520.5" y2="155"/>
<line x1="570.5" y1="148" x2="570.5" y2="155"/>
<line x1="620.5" y1="148" x2="620.5" y2="155"/>
<line x1="670.5" y1="148" x2="670.5" y2="155"/>
<line x1="720.5" y1="148" x2="720.5" y2="155"/>
<line x1="770.5" y1="148" x2="770.5" y2="155"/>
<line x1="820.5" y1="148" x2="820.5" y2="155"/>
<line x1="870.5" y1="148" x2="870.5" y2="155"/>
<line x1="920.5" y1="148" x2="920.5" y2="155"/>
<line x1="970.5" y1="148" x2="970.5" y2="155"/>
<line x1="1020.5" y1="148" x2="1020.5" y2="155"/>
<line x1="1070.5" y1="148" x2="1070.5" y2="155"/>
<line x1="1120.5" y1="148" x2="1120.5" y2="155"/>
<line x1="88" y1="707.5" x2="95" y2="707.5"/>
<line x1="88" y1="657.5" x2="95" y2="657.5"/>
<line x1="88" y1="607.5" x2="95" y2="607.5"/>
<line x1="88" y1="557.5" x2="95" y2="557.5"/>
<line x1="88" y1="507.5" x2="95" y2="507.5"/>
<line x1="88" y1="457.5" x2="95" y2="457.5"/>
<line x1="88" y1="407.5" x2="95" y2="407.5"/>
<line x1="88" y1="357.5" x2="95" y2="357.5"/>
<line x1="88" y1="307.5" x2="95" y2="307.5"/>
<line x1="88" y1="257.5" x2="95" y2="257.5"/>
<line x1="88" y1="207.5" x2="95" y2="207.5"/>
<line x1="88" y1="157.5" x2="95" y2="157.5"/>
</g>
<path d="M614.5,145 L626,145 L620.25,150.8 Z" fill="#000"/><line x1="620.5" y1="150" x2="620.5" y2="155" stroke="#333"/>
<defs><clipPath id="lrclip"><rect x="72" y="155" width="23" height="593"/></clipPath></defs><g clip-path="url(#lrclip)" font-family="Liberation Sans" font-size="9" fill="#111" text-anchor="middle"><text transform="translate(80.6,707) rotate(-90)" x="0" y="0">0</text><text transform="translate(80.6,657) rotate(-90)" x="0" y="0">10</text><text transform="translate(80.6,607) rotate(-90)" x="0" y="0">20</text><text transform="translate(80.6,557) rotate(-90)" x="0" y="0">30</text><text transform="translate(80.6,507) rotate(-90)" x="0" y="0">40</text><text transform="translate(80.6,457) rotate(-90)" x="0" y="0">50</text><text transform="translate(80.6,407) rotate(-90)" x="0" y="0">60</text><text transform="translate(80.6,357) rotate(-90)" x="0" y="0">70</text><text transform="translate(80.6,307) rotate(-90)" x="0" y="0">80</text><text transform="translate(80.6,257) rotate(-90)" x="0" y="0">90</text><text transform="translate(80.6,207) rotate(-90)" x="0" y="0">100</text><text transform="translate(80.6,157) rotate(-90)" x="0" y="0">110</text></g><path d="M85.5,350.5 L85.5,362.5 L91.5,356.5 Z" fill="#000"/>
</svg>
<svg class="a" style="left:95px;top:155px" width="1044" height="577" viewBox="95 155 1044 577">
<rect x="95" y="155" width="1044" height="577" fill="#000"/>
<g stroke="#191919" stroke-width="1"><line x1="120.5" y1="155" x2="120.5" y2="732"/><line x1="620.5" y1="155" x2="620.5" y2="732"/><line x1="1120.5" y1="155" x2="1120.5" y2="732"/><line x1="95" y1="207.5" x2="1139" y2="207.5"/><line x1="95" y1="707.5" x2="1139" y2="707.5"/></g>
<g fill="#3c3c3c">
<rect x="120" y="707" width="1" height="1"/>
<rect x="120" y="657" width="1" height="1"/>
<rect x="120" y="607" width="1" height="1"/>
<rect x="120" y="557" width="1" height="1"/>
<rect x="120" y="507" width="1" height="1"/>
<rect x="120" y="457" width="1" height="1"/>
<rect x="120" y="407" width="1" height="1"/>
<rect x="120" y="357" width="1" height="1"/>
<rect x="120" y="307" width="1" height="1"/>
<rect x="120" y="257" width="1" height="1"/>
<rect x="120" y="207" width="1" height="1"/>
<rect x="120" y="157" width="1" height="1"/>
<rect x="170" y="707" width="1" height="1"/>
<rect x="170" y="657" width="1" height="1"/>
<rect x="170" y="607" width="1" height="1"/>
<rect x="170" y="557" width="1" height="1"/>
<rect x="170" y="507" width="1" height="1"/>
<rect x="170" y="457" width="1" height="1"/>
<rect x="170" y="407" width="1" height="1"/>
<rect x="170" y="357" width="1" height="1"/>
<rect x="170" y="307" width="1" height="1"/>
<rect x="170" y="257" width="1" height="1"/>
<rect x="170" y="207" width="1" height="1"/>
<rect x="170" y="157" width="1" height="1"/>
<rect x="220" y="707" width="1" height="1"/>
<rect x="220" y="657" width="1" height="1"/>
<rect x="220" y="607" width="1" height="1"/>
<rect x="220" y="557" width="1" height="1"/>
<rect x="220" y="507" width="1" height="1"/>
<rect x="220" y="457" width="1" height="1"/>
<rect x="220" y="407" width="1" height="1"/>
<rect x="220" y="357" width="1" height="1"/>
<rect x="220" y="307" width="1" height="1"/>
<rect x="220" y="257" width="1" height="1"/>
<rect x="220" y="207" width="1" height="1"/>
<rect x="220" y="157" width="1" height="1"/>
<rect x="270" y="707" width="1" height="1"/>
<rect x="270" y="657" width="1" height="1"/>
<rect x="270" y="607" width="1" height="1"/>
<rect x="270" y="557" width="1" height="1"/>
<rect x="270" y="507" width="1" height="1"/>
<rect x="270" y="457" width="1" height="1"/>
<rect x="270" y="407" width="1" height="1"/>
<rect x="270" y="357" width="1" height="1"/>
<rect x="270" y="307" width="1" height="1"/>
<rect x="270" y="257" width="1" height="1"/>
<rect x="270" y="207" width="1" height="1"/>
<rect x="270" y="157" width="1" height="1"/>
<rect x="320" y="707" width="1" height="1"/>
<rect x="320" y="657" width="1" height="1"/>
<rect x="320" y="607" width="1" height="1"/>
<rect x="320" y="557" width="1" height="1"/>
<rect x="320" y="507" width="1" height="1"/>
<rect x="320" y="457" width="1" height="1"/>
<rect x="320" y="407" width="1" height="1"/>
<rect x="320" y="357" width="1" height="1"/>
<rect x="320" y="307" width="1" height="1"/>
<rect x="320" y="257" width="1" height="1"/>
<rect x="320" y="207" width="1" height="1"/>
<rect x="320" y="157" width="1" height="1"/>
<rect x="370" y="707" width="1" height="1"/>
<rect x="370" y="657" width="1" height="1"/>
<rect x="370" y="607" width="1" height="1"/>
<rect x="370" y="557" width="1" height="1"/>
<rect x="370" y="507" width="1" height="1"/>
<rect x="370" y="457" width="1" height="1"/>
<rect x="370" y="407" width="1" height="1"/>
<rect x="370" y="357" width="1" height="1"/>
<rect x="370" y="307" width="1" height="1"/>
<rect x="370" y="257" width="1" height="1"/>
<rect x="370" y="207" width="1" height="1"/>
<rect x="370" y="157" width="1" height="1"/>
<rect x="420" y="707" width="1" height="1"/>
<rect x="420" y="657" width="1" height="1"/>
<rect x="420" y="607" width="1" height="1"/>
<rect x="420" y="557" width="1" height="1"/>
<rect x="420" y="507" width="1" height="1"/>
<rect x="420" y="457" width="1" height="1"/>
<rect x="420" y="407" width="1" height="1"/>
<rect x="420" y="357" width="1" height="1"/>
<rect x="420" y="307" width="1" height="1"/>
<rect x="420" y="257" width="1" height="1"/>
<rect x="420" y="207" width="1" height="1"/>
<rect x="420" y="157" width="1" height="1"/>
<rect x="470" y="707" width="1" height="1"/>
<rect x="470" y="657" width="1" height="1"/>
<rect x="470" y="607" width="1" height="1"/>
<rect x="470" y="557" width="1" height="1"/>
<rect x="470" y="507" width="1" height="1"/>
<rect x="470" y="457" width="1" height="1"/>
<rect x="470" y="407" width="1" height="1"/>
<rect x="470" y="357" width="1" height="1"/>
<rect x="470" y="307" width="1" height="1"/>
<rect x="470" y="257" width="1" height="1"/>
<rect x="470" y="207" width="1" height="1"/>
<rect x="470" y="157" width="1" height="1"/>
<rect x="520" y="707" width="1" height="1"/>
<rect x="520" y="657" width="1" height="1"/>
<rect x="520" y="607" width="1" height="1"/>
<rect x="520" y="557" width="1" height="1"/>
<rect x="520" y="507" width="1" height="1"/>
<rect x="520" y="457" width="1" height="1"/>
<rect x="520" y="407" width="1" height="1"/>
<rect x="520" y="357" width="1" height="1"/>
<rect x="520" y="307" width="1" height="1"/>
<rect x="520" y="257" width="1" height="1"/>
<rect x="520" y="207" width="1" height="1"/>
<rect x="520" y="157" width="1" height="1"/>
<rect x="570" y="707" width="1" height="1"/>
<rect x="570" y="657" width="1" height="1"/>
<rect x="570" y="607" width="1" height="1"/>
<rect x="570" y="557" width="1" height="1"/>
<rect x="570" y="507" width="1" height="1"/>
<rect x="570" y="457" width="1" height="1"/>
<rect x="570" y="407" width="1" height="1"/>
<rect x="570" y="357" width="1" height="1"/>
<rect x="570" y="307" width="1" height="1"/>
<rect x="570" y="257" width="1" height="1"/>
<rect x="570" y="207" width="1" height="1"/>
<rect x="570" y="157" width="1" height="1"/>
<rect x="620" y="707" width="1" height="1"/>
<rect x="620" y="657" width="1" height="1"/>
<rect x="620" y="607" width="1" height="1"/>
<rect x="620" y="557" width="1" height="1"/>
<rect x="620" y="507" width="1" height="1"/>
<rect x="620" y="457" width="1" height="1"/>
<rect x="620" y="407" width="1" height="1"/>
<rect x="620" y="357" width="1" height="1"/>
<rect x="620" y="307" width="1" height="1"/>
<rect x="620" y="257" width="1" height="1"/>
<rect x="620" y="207" width="1" height="1"/>
<rect x="620" y="157" width="1" height="1"/>
<rect x="670" y="707" width="1" height="1"/>
<rect x="670" y="657" width="1" height="1"/>
<rect x="670" y="607" width="1" height="1"/>
<rect x="670" y="557" width="1" height="1"/>
<rect x="670" y="507" width="1" height="1"/>
<rect x="670" y="457" width="1" height="1"/>
<rect x="670" y="407" width="1" height="1"/>
<rect x="670" y="357" width="1" height="1"/>
<rect x="670" y="307" width="1" height="1"/>
<rect x="670" y="257" width="1" height="1"/>
<rect x="670" y="207" width="1" height="1"/>
<rect x="670" y="157" width="1" height="1"/>
<rect x="720" y="707" width="1" height="1"/>
<rect x="720" y="657" width="1" height="1"/>
<rect x="720" y="607" width="1" height="1"/>
<rect x="720" y="557" width="1" height="1"/>
<rect x="720" y="507" width="1" height="1"/>
<rect x="720" y="457" width="1" height="1"/>
<rect x="720" y="407" width="1" height="1"/>
<rect x="720" y="357" width="1" height="1"/>
<rect x="720" y="307" width="1" height="1"/>
<rect x="720" y="257" width="1" height="1"/>
<rect x="720" y="207" width="1" height="1"/>
<rect x="720" y="157" width="1" height="1"/>
<rect x="770" y="707" width="1" height="1"/>
<rect x="770" y="657" width="1" height="1"/>
<rect x="770" y="607" width="1" height="1"/>
<rect x="770" y="557" width="1" height="1"/>
<rect x="770" y="507" width="1" height="1"/>
<rect x="770" y="457" width="1" height="1"/>
<rect x="770" y="407" width="1" height="1"/>
<rect x="770" y="357" width="1" height="1"/>
<rect x="770" y="307" width="1" height="1"/>
<rect x="770" y="257" width="1" height="1"/>
<rect x="770" y="207" width="1" height="1"/>
<rect x="770" y="157" width="1" height="1"/>
<rect x="820" y="707" width="1" height="1"/>
<rect x="820" y="657" width="1" height="1"/>
<rect x="820" y="607" width="1" height="1"/>
<rect x="820" y="557" width="1" height="1"/>
<rect x="820" y="507" width="1" height="1"/>
<rect x="820" y="457" width="1" height="1"/>
<rect x="820" y="407" width="1" height="1"/>
<rect x="820" y="357" width="1" height="1"/>
<rect x="820" y="307" width="1" height="1"/>
<rect x="820" y="257" width="1" height="1"/>
<rect x="820" y="207" width="1" height="1"/>
<rect x="820" y="157" width="1" height="1"/>
<rect x="870" y="707" width="1" height="1"/>
<rect x="870" y="657" width="1" height="1"/>
<rect x="870" y="607" width="1" height="1"/>
<rect x="870" y="557" width="1" height="1"/>
<rect x="870" y="507" width="1" height="1"/>
<rect x="870" y="457" width="1" height="1"/>
<rect x="870" y="407" width="1" height="1"/>
<rect x="870" y="357" width="1" height="1"/>
<rect x="870" y="307" width="1" height="1"/>
<rect x="870" y="257" width="1" height="1"/>
<rect x="870" y="207" width="1" height="1"/>
<rect x="870" y="157" width="1" height="1"/>
<rect x="920" y="707" width="1" height="1"/>
<rect x="920" y="657" width="1" height="1"/>
<rect x="920" y="607" width="1" height="1"/>
<rect x="920" y="557" width="1" height="1"/>
<rect x="920" y="507" width="1" height="1"/>
<rect x="920" y="457" width="1" height="1"/>
<rect x="920" y="407" width="1" height="1"/>
<rect x="920" y="357" width="1" height="1"/>
<rect x="920" y="307" width="1" height="1"/>
<rect x="920" y="257" width="1" height="1"/>
<rect x="920" y="207" width="1" height="1"/>
<rect x="920" y="157" width="1" height="1"/>
<rect x="970" y="707" width="1" height="1"/>
<rect x="970" y="657" width="1" height="1"/>
<rect x="970" y="607" width="1" height="1"/>
<rect x="970" y="557" width="1" height="1"/>
<rect x="970" y="507" width="1" height="1"/>
<rect x="970" y="457" width="1" height="1"/>
<rect x="970" y="407" width="1" height="1"/>
<rect x="970" y="357" width="1" height="1"/>
<rect x="970" y="307" width="1" height="1"/>
<rect x="970" y="257" width="1" height="1"/>
<rect x="970" y="207" width="1" height="1"/>
<rect x="970" y="157" width="1" height="1"/>
<rect x="1020" y="707" width="1" height="1"/>
<rect x="1020" y="657" width="1" height="1"/>
<rect x="1020" y="607" width="1" height="1"/>
<rect x="1020" y="557" width="1" height="1"/>
<rect x="1020" y="507" width="1" height="1"/>
<rect x="1020" y="457" width="1" height="1"/>
<rect x="1020" y="407" width="1" height="1"/>
<rect x="1020" y="357" width="1" height="1"/>
<rect x="1020" y="307" width="1" height="1"/>
<rect x="1020" y="257" width="1" height="1"/>
<rect x="1020" y="207" width="1" height="1"/>
<rect x="1020" y="157" width="1" height="1"/>
<rect x="1070" y="707" width="1" height="1"/>
<rect x="1070" y="657" width="1" height="1"/>
<rect x="1070" y="607" width="1" height="1"/>
<rect x="1070" y="557" width="1" height="1"/>
<rect x="1070" y="507" width="1" height="1"/>
<rect x="1070" y="457" width="1" height="1"/>
<rect x="1070" y="407" width="1" height="1"/>
<rect x="1070" y="357" width="1" height="1"/>
<rect x="1070" y="307" width="1" height="1"/>
<rect x="1070" y="257" width="1" height="1"/>
<rect x="1070" y="207" width="1" height="1"/>
<rect x="1070" y="157" width="1" height="1"/>
<rect x="1120" y="707" width="1" height="1"/>
<rect x="1120" y="657" width="1" height="1"/>
<rect x="1120" y="607" width="1" height="1"/>
<rect x="1120" y="557" width="1" height="1"/>
<rect x="1120" y="507" width="1" height="1"/>
<rect x="1120" y="457" width="1" height="1"/>
<rect x="1120" y="407" width="1" height="1"/>
<rect x="1120" y="357" width="1" height="1"/>
<rect x="1120" y="307" width="1" height="1"/>
<rect x="1120" y="257" width="1" height="1"/>
<rect x="1120" y="207" width="1" height="1"/>
<rect x="1120" y="157" width="1" height="1"/>
</g>
<g stroke="#6a0c0c" stroke-width="1.2"><line x1="100" y1="707.5" x2="140.5" y2="707.5"/><line x1="120.5" y1="687" x2="120.5" y2="727.5"/></g>
<rect x="550.2" y="287.6" width="140.3" height="139.5" fill="none" stroke="#50608c" stroke-width="1.6" stroke-dasharray="6 2.5 1.5 2.5"/>
<g fill="none" stroke="#f2f2f2" stroke-width="1.35"><path d="M815,188 L601,188 L420,293 L420,557 L870,557"/><path d="M420,444.5 L870,444.5"/></g>
<circle cx="620" cy="357" r="70.3" fill="none" stroke="#f2f2f2" stroke-width="1.3"/>
<g stroke="#a80000" stroke-width="1.1" fill="none"><circle cx="819.5" cy="188" r="5.2"/><line x1="819.5" y1="182.5" x2="819.5" y2="193.5"/><line x1="815" y1="188" x2="824.5" y2="188"/></g>
<defs><radialGradient id="ring" cx="0.5" cy="0.5" r="0.5"><stop offset="0.76" stop-color="#000" stop-opacity="0"/><stop offset="0.82" stop-color="#1a2228"/><stop offset="0.88" stop-color="#2e3a44"/><stop offset="0.93" stop-color="#44525e"/><stop offset="0.975" stop-color="#5e7282"/><stop offset="1" stop-color="#506272"/></radialGradient></defs>
<circle cx="620" cy="357" r="39.5" fill="url(#ring)"/><g fill="none" stroke="#6f8494" stroke-width="0.6" opacity="0.6"><circle cx="620" cy="357" r="37.5"/><circle cx="620" cy="357" r="35.5"/><circle cx="620" cy="357" r="33.5"/></g>
<g stroke="#bdbdbd" stroke-width="3"><line x1="604.5" y1="357" x2="635.7" y2="357"/><line x1="620" y1="341" x2="620" y2="373"/></g>
<circle cx="620" cy="357" r="4.8" fill="none" stroke="#c8961c" stroke-width="0.8" stroke-dasharray="1.6 1.4"/><circle cx="620" cy="357" r="1.6" fill="#222"/>
<text x="627.6" y="375.3" font-family="Liberation Sans" font-size="13.5" fill="#e6b022">Rejilla</text>
<defs><linearGradient id="key" x1="0" y1="0" x2="1" y2="1"><stop offset="0" stop-color="#ffffff"/><stop offset="1" stop-color="#cfcfcf"/></linearGradient></defs>
<rect x="533.8" y="406" width="72" height="72.2" rx="6" fill="url(#key)" stroke="#6a6a6a" stroke-width="2.4"/>
<rect x="626.1" y="406" width="72" height="72.2" rx="6" fill="url(#key)" stroke="#6a6a6a" stroke-width="2.4"/>
<g fill="none" stroke="#111" stroke-width="1.7" stroke-linecap="round" stroke-linejoin="round"><path d="M566.5,439.5 L572.6,435 L572.6,455.2"/><path d="M663.5,435 L654.8,450 L668.2,450 M664.5,443.5 L664.5,455.2"/></g>
</svg>
<div class="a" style="left:95px;top:732px;width:988px;height:15px;background:#f8f8f8"></div>
<div class="a" style="left:158px;top:736px;width:819px;height:8px;border-radius:4px;background:#808080"></div>
<div class="a" style="left:1083px;top:732px;width:70px;height:16px;background:#ececec;font-size:13px;line-height:16px;text-align:right;color:#111">10 &lt; 100</div>
<div class="a" style="left:1139px;top:155px;width:14px;height:577px;background:#f8f8f8"></div>
<div class="a" style="left:1142.5px;top:338px;width:8px;height:282px;border-radius:4px;background:#808080"></div>
<div class="a" style="left:72px;top:747px;width:1083px;height:2px;background:#c4c4c4"></div>
<div class="a" style="left:72px;top:749px;width:1081px;height:21px;background:#fff"></div>
<div class="a" style="left:76.5px;top:750px;font-size:13.5px;line-height:16px;font-style:italic;color:#0c10e0">Comando: cr</div>
<div class="a" style="left:1139px;top:749px;width:14px;height:21px;background:#f8f8f8"></div>
<div class="a" style="left:1142.5px;top:750.5px;width:8px;height:17px;border-radius:4px;background:#808080"></div>
<div class="a" style="left:72px;top:770px;width:1083px;height:1px;background:#c8c8c8"></div>
<div class="a" style="left:72px;top:771px;width:1083px;height:27px;background:#ececec"></div>
<div class="a" style="left:73px;top:777.5px;font-size:13.5px;line-height:16px;color:#111">Posición:</div>
<div class="a" style="left:131px;top:776px;width:996px;height:18px;background:#fff"></div>
<div class="a" style="left:1127px;top:772px;width:26px;height:25px;background:#efefef;border:1px solid #c4c4c4"><svg width="24" height="23" style="position:absolute;left:0;top:0"><rect x="5.5" y="7.5" width="13.5" height="9" fill="#f4f4f4" stroke="#444" stroke-width="0.8"/><rect x="5.2" y="7.2" width="14.2" height="2" fill="#000"/></svg></div>
<div class="a" style="left:82px;top:110px;width:1083px;height:20px;font-size:12px;line-height:20px;text-align:center;color:#222"></div>
<div class="a" style="left:600px;top:112px;font-size:12px;line-height:16px;color:#222">* Sin título 1</div>
<div class="a" style="left:1155px;top:108px;width:300px;height:690px;background:#fff;border-left:1px solid #d0d0d0;border-right:1px solid #c8c8c8;border-bottom:1px solid #c4c4c4"></div>
<div class="a" style="left:1155px;top:108px;width:300px;height:22px;background:linear-gradient(#f0f0f0,#e6e6e6 60%,#dadada)"></div>
<div class="a" style="left:1155px;top:130px;width:300px;height:26.5px;background:#a9a9a9"></div>
<div class="lyb" style="left:1156px"></div><div class="lyb" style="left:1216px"></div><div class="lyb" style="left:1276px"></div><div class="lyb" style="left:1336px"></div><div class="lyb" style="left:1396px"></div>
<div class="a" style="left:1284px;top:111px;font-size:12px;line-height:16px;color:#333;letter-spacing:0.05px">Lista de capas</div>
<div class="a" style="left:1183px;top:159px;font-size:13.5px;line-height:16px;color:#111">0</div>
<svg class="a" style="left:1155px;top:108px" width="300" height="80" viewBox="1155 108 300 80">
<defs>
 <g id="eye"><path d="M-8,0.5 C-6,-5.5 6,-5.5 8,0.5 C6,5.5 -6,5.5 -8,0.5 Z"/><path d="M-5.5,0.8 C-4,-2.8 4,-2.8 5.5,0.8 C4,3.6 -4,3.6 -5.5,0.8 Z" fill="#fff"/><circle cx="0" cy="0.6" r="2.6"/><circle cx="-0.8" cy="-0.4" r="0.7" fill="#fff"/></g>
 <g id="pencil"><path d="M0,0 L11.5,-11.5 L14,-9 L2.5,2.5 Z" fill="#e8b040" stroke="#8a6020" stroke-width="0.6"/><path d="M11.5,-11.5 L12.8,-12.8 L15.3,-10.3 L14,-9 Z" fill="#e03030"/><path d="M0,0 L-1.2,3.7 L2.5,2.5 Z" fill="#f0d8a0" stroke="#8a6020" stroke-width="0.5"/><path d="M-1.2,3.7 L-0.6,2 L0.6,3.2 Z" fill="#333"/></g>
</defs>
<circle cx="1164" cy="118.4" r="7.2" fill="#6a6a6a"/>
<path d="M1161,115.4 L1167,121.4 M1167,115.4 L1161,121.4" stroke="#fff" stroke-width="1.8"/>
<circle cx="1182" cy="118.4" r="7.2" fill="#6a6a6a"/>
<rect x="1180" y="114.8" width="5.5" height="4.5" fill="none" stroke="#fff" stroke-width="1"/>
<rect x="1178" y="117.5" width="5.5" height="4.5" fill="#6a6a6a" stroke="#fff" stroke-width="1"/>
<use href="#eye" x="1185.1" y="142.8" fill="#000"/>
<g opacity="0.35"><use href="#eye" x="1244.7" y="142.8" fill="#000"/></g>
<path d="M1299,142.8 L1311,142.8 M1305,136.8 L1305,148.8" stroke="#f00000" stroke-width="3"/>
<path d="M1359,142.8 L1371,142.8" stroke="#f00000" stroke-width="3"/>
<use href="#pencil" x="1419" y="148.3"/>
<rect x="1161.5" y="163.5" width="15.5" height="8" fill="none" stroke="#111" stroke-width="1"/>
<use href="#pencil" x="1396.5" y="171.5"/>
<use href="#eye" x="1422.8" y="166.6" fill="#000"/>
<path d="M1442,166 L1442,163.8 C1442,159.5 1448,159.5 1448,163.8 L1448,166" fill="none" stroke="#bbb" stroke-width="1.3"/>
<rect x="1440.3" y="166" width="9.5" height="7.3" fill="#bbb"/>
</svg>
<div class="a" style="left:1455px;top:108px;width:45px;height:690px;background:linear-gradient(90deg,#c9c9c9 0,#eeeeee 2px,#e4e4e4 25px,#cfcfcf 45px)"></div>
<div class="a" style="left:1456.5px;top:120px;width:42px;height:42.5px;border-radius:6px;background:#b9b9b9"></div>
<div class="a" style="left:1456px;top:417px;width:43px;height:42.5px;border-radius:6px;background:#b9b9b9"></div>
<svg class="a" style="left:1455px;top:108px" width="45" height="400" viewBox="1455 108 45 400">
<defs>
 <g id="win"><rect x="0.5" y="0.5" width="27" height="27" fill="#fff" stroke="#444" stroke-width="1"/><rect x="0" y="0" width="28" height="4.2" fill="#000"/><rect x="1.2" y="0.9" width="2.8" height="2.8" fill="#fff"/></g>
</defs>
<g fill="#a0a0a0"><rect x="1463" y="116" width="2" height="2"/><rect x="1468.5" y="116" width="2" height="2"/><rect x="1474" y="116" width="2" height="2"/><rect x="1479.5" y="116" width="2" height="2"/><rect x="1485" y="116" width="2" height="2"/></g>
<g stroke="#777" stroke-width="1" stroke-dasharray="1 2"><line x1="1458" y1="261.5" x2="1500" y2="261.5"/><line x1="1458" y1="409.5" x2="1500" y2="409.5"/></g>
<use href="#win" x="1463" y="127"/>
<use href="#win" x="1463" y="174"/>
<use href="#win" x="1463" y="220.5"/>
<use href="#win" x="1463" y="276"/>
<use href="#win" x="1463" y="322"/>
<use href="#win" x="1463" y="368.5"/>
<use href="#win" x="1463" y="424"/>
<use href="#win" x="1463" y="471"/>
<!-- layers icon -->
<path d="M1470,137.5 L1477.5,134.5 L1477.5,146 L1470,149 Z" fill="#999" stroke="#444" stroke-width="0.6"/>
<path d="M1472.5,136.5 L1480,133.5 L1480,145 L1472.5,148 Z" fill="#e4e4e4" stroke="#555" stroke-width="0.6"/>
<path d="M1475,135.5 L1484,132 L1484,143.5 L1475,147 Z" fill="#fff" stroke="#555" stroke-width="0.6"/>
<path d="M1477.5,144.5 L1481.5,136.5 L1482,143 Z" fill="none" stroke="#f03030" stroke-width="0.7"/>
<!-- block icon -->
<rect x="1470" y="184.5" width="11" height="8" fill="#f4eab0" stroke="#555" stroke-width="0.8"/>
<circle cx="1481" cy="193" r="5" fill="#f4eab0" fill-opacity="0.8" stroke="#555" stroke-width="0.8"/>
<!-- view icon -->
<rect x="1469" y="232" width="16" height="11" rx="2" fill="#f4f6fa" stroke="#c0d0e8" stroke-width="0.8"/>
<!-- property list -->
<g fill="#111"><rect x="1466.5" y="282" width="4" height="3.5"/><rect x="1466.5" y="288" width="4" height="3.5"/><rect x="1466.5" y="294" width="4" height="3.5"/></g>
<g fill="none" stroke="#333" stroke-width="0.7"><rect x="1472.5" y="282.5" width="14" height="2.5"/><rect x="1472.5" y="288.5" width="14" height="2.5"/><rect x="1472.5" y="294.5" width="14" height="2.5"/></g>
<!-- funnel -->
<path d="M1469,331.5 L1485,331.5 L1478.5,338.5 L1478.5,346 L1475.5,344 L1475.5,338.5 Z" fill="#c8c8c8" stroke="#555" stroke-width="0.7"/>
<path d="M1470.5,332.5 L1483.5,332.5" stroke="#999" stroke-width="1"/>
<!-- screw -->
<path d="M1468,378 L1474,382 L1474,388 L1468,392 Z" fill="#fff" stroke="#333" stroke-width="0.7"/>
<rect x="1474" y="381" width="11" height="8" fill="#999" stroke="#555" stroke-width="0.5"/>
<path d="M1466,385 L1489,385" stroke="#f08080" stroke-width="0.6" stroke-dasharray="1.5 1"/>
<!-- command -->
<g fill="#999"><rect x="1466" y="431.5" width="9" height="0.9"/><rect x="1466" y="434.5" width="8" height="0.9"/><rect x="1466" y="437.5" width="10" height="0.9"/><rect x="1466" y="440.5" width="11" height="0.9"/></g>
<rect x="1463.5" y="446" width="27" height="0.8" fill="#444"/>
<g fill="#777"><rect x="1466" y="448" width="1.5" height="1"/><rect x="1474" y="448" width="13" height="1"/></g>
<!-- clipboard -->
<rect x="1470" y="478.5" width="14.5" height="17" rx="1" fill="#c9861e" stroke="#8a6020" stroke-width="0.6"/>
<rect x="1471.8" y="480.5" width="11" height="13.5" fill="#f8f8f8"/>
<rect x="1474" y="476.8" width="6.5" height="3.2" rx="0.6" fill="#9a9a90" stroke="#666" stroke-width="0.5"/>
<g stroke="#bbb" stroke-width="0.7"><path d="M1473.5,484 L1481,484 M1473.5,486.3 L1481,486.3 M1473.5,488.6 L1480,488.6 M1473.5,490.9 L1481,490.9"/></g>
</svg>
<div class="a" style="left:0;top:798px;width:1500px;height:46px;background:#dcdcdc"></div>
<div class="a st" style="left:2px;top:805.5px;letter-spacing:1px">100,70</div>
<div class="a st st2" style="left:2px;top:825.5px;letter-spacing:0.72px">@-39.8714,-33.799</div>
<div class="a" style="left:253.5px;top:802px;width:1px;height:40px;background:#9a9a9a"></div>
<div class="a st" style="left:256px;top:805.5px;letter-spacing:1.2px">122.0656&lt;35°</div>
<div class="a st" style="left:255.5px;top:825.5px;letter-spacing:0.98px">@52.2695&lt;220°</div>
<div class="a" style="left:506.5px;top:818.5px;width:6px;height:6px;border-radius:3px;background:#c4c4c4"></div>
<div class="a st" style="left:660.5px;top:815.5px">Posición</div>
<svg class="a" style="left:714px;top:804px" width="26" height="34" viewBox="714 804 26 34"><path d="M718.5,814 C718.5,806 733.5,806 733.5,814 L733.5,827 C733.5,836.5 718.5,836.5 718.5,827 Z M718.5,818 L733.5,818 M726,807 L726,818" fill="#fff" stroke="#333" stroke-width="0.9"/><rect x="724.2" y="809" width="3.6" height="6" rx="1.8" fill="#fff" stroke="#333" stroke-width="0.8"/></svg>
<div class="a st" style="left:754.5px;top:815.5px">Cancelar</div>
<div class="a" style="left:940px;top:818.5px;width:6px;height:6px;border-radius:3px;background:#c4c4c4"></div>
<div class="a st" style="left:949px;top:815.5px;letter-spacing:0.62px">No hay entidades seleccionadas.</div>
<div class="a" style="left:1268.5px;top:818.5px;width:6px;height:6px;border-radius:3px;background:#c4c4c4"></div>

</body></html>
